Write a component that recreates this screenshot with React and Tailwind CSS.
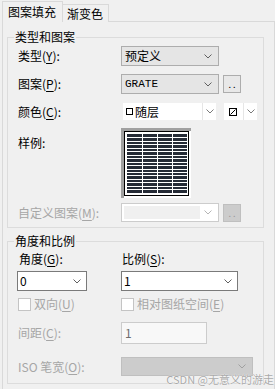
import React from 'react';

const Chevron = ({ color = '#606060' }) => (
  <svg width="8" height="5" viewBox="0 0 8 5" className="shrink-0">
    <polyline points="0.5,0.5 4,4 7.5,0.5" fill="none" stroke={color} strokeWidth="1" />
  </svg>
);

const Key = ({ children }) => <span className="underline underline-offset-2">{children}</span>;

// the GRATE preview swatch
const Swatch = () => {
  const rows = [];
  for (let y = 3.45; y < 59; y += 3.45) rows.push(Math.round(y) + 0.5);
  return (
    <svg width="60" height="59" viewBox="0 0 60 59" className="block">
      <rect width="60" height="59" fill="#252b36" />
      {rows.map((y) => (
        <line key={y} x1="0" x2="60" y1={y} y2={y} stroke="#fff" strokeWidth="1" />
      ))}
      {[15.5, 30.5, 45.5].map((x) => (
        <line key={x} x1={x} x2={x} y1="0" y2="59" stroke="#fff" strokeWidth="1" />
      ))}
    </svg>
  );
};

const App = () => {
  return (
    <div
      className="relative w-[275px] h-[389px] overflow-hidden bg-[#f0f0f0] pt-px pl-[2px] text-[12px] leading-[14px] text-black"
      style={{ fontFamily: '"Noto Sans CJK SC", "Noto Sans", sans-serif' }}
    >
      {/* Tabs */}
      <div className="flex items-end h-[21px]">
        <div className="relative z-10 h-[21px] w-[61px] border border-b-0 border-[#d9d9d9] bg-[#f0f0f0] pl-[5px] pt-[3px]">
          图案填充
        </div>
        <div className="h-[18px] w-[46px] border border-l-0 border-b-0 border-[#d9d9d9] bg-[#f0f0f0] pl-[4px] pt-[2px]">
          渐变色
        </div>
      </div>

      {/* Panel */}
      <div className="-mt-px w-[273px] h-[380px] border border-[#d9d9d9] pl-[4px] pt-[8px]">
        {/* 类型和图案 */}
        <fieldset className="w-[257px] border border-[#dcdcdc] pl-[10px] pb-[5px]">
          <legend className="-ml-[4px] px-[1px] leading-[14px]">类型和图案</legend>

          <div className="mt-[2px] flex items-center h-[20px]">
            <div className="w-[103px]">类型(<Key>Y</Key>):</div>
            <div className="flex items-center justify-between w-[98px] h-[20px] bg-[#e5e5e5] border border-[#adadad] pl-[3px] pr-[6px]">
              <span>预定义</span>
              <Chevron />
            </div>
          </div>

          <div className="mt-[8px] flex items-center h-[20px]">
            <div className="w-[103px]">图案(<Key>P</Key>):</div>
            <div className="flex items-center justify-between w-[98px] h-[20px] bg-[#e5e5e5] border border-[#adadad] pl-[3px] pr-[6px]">
              <span className="text-[11px]" style={{ fontFamily: '"Liberation Mono", monospace' }}>GRATE</span>
              <Chevron />
            </div>
            <div className="ml-[4px] flex items-end justify-center w-[18px] h-[18px] bg-[#e8e8e8] border border-[#adadad] pb-[3px] text-[9px] leading-[9px]">
              . .
            </div>
          </div>

          <div className="mt-[9px] flex items-center h-[17px]">
            <div className="w-[105px]">颜色(<Key>C</Key>):</div>
            <div className="flex items-center w-[93px] h-[17px] bg-white pl-[3px]">
              <span className="w-[7px] h-[7px] border border-black bg-white shrink-0"></span>
              <span className="ml-[2px] flex-1">随层</span>
              <div className="flex items-center justify-center w-[14px] h-[17px] border-l border-[#e6e6e6]">
                <Chevron color="#7a7a7a" />
              </div>
            </div>
            <div className="ml-[8px] flex items-center w-[33px] h-[17px] bg-white pl-[5px]">
              <svg width="8" height="8" viewBox="0 0 8 8" className="shrink-0">
                <rect x="0.5" y="0.5" width="7" height="7" fill="#fff" stroke="#000" />
                <line x1="1.5" y1="6.5" x2="6.5" y2="1.5" stroke="#000" />
              </svg>
              <div className="ml-auto flex items-center justify-center w-[14px] h-[17px] border-l border-[#e6e6e6]">
                <Chevron color="#7a7a7a" />
              </div>
            </div>
          </div>

          <div className="mt-[8px] flex">
            <div className="w-[103px] mt-[8px]">样例:</div>
            <div className="w-[70px] h-[70px] border-t-[3px] border-l-[3px] border-[#a0a0a0] bg-white pr-[2px] pb-[2px]">
              <div className="w-[65px] h-[65px] border border-black p-[2px]">
                <Swatch />
              </div>
            </div>
          </div>

          <div className="mt-[5px] flex items-center h-[19px] text-[#a6a6a6]">
            <div className="w-[103px] whitespace-nowrap">自定义图案(<Key>M</Key>):</div>
            <div className="flex items-center w-[98px] h-[19px] bg-white border border-[#cccccc] p-[2px]">
              <div className="flex-1 h-full bg-[#f0f0f0]"></div>
              <div className="w-[16px] flex justify-center">
                <Chevron color="#b5b5b5" />
              </div>
            </div>
            <div className="ml-[4px] flex items-end justify-center w-[18px] h-[18px] bg-[#cccccc] border border-[#bfbfbf] pb-[3px] text-[9px] leading-[9px] text-[#9a9a9a]">
              . .
            </div>
          </div>
        </fieldset>

        {/* 角度和比例 */}
        <fieldset className="mt-[6px] w-[257px] border border-[#dcdcdc] pl-[9px] pb-[7px]">
          <legend className="-ml-[3px] px-[1px] leading-[14px]">角度和比例</legend>

          <div className="mt-[4px] flex h-[14px]">
            <div className="w-[104px] pl-[2px]">角度(<Key>G</Key>):</div>
            <div className="pl-px">比例(<Key>S</Key>):</div>
          </div>

          <div className="mt-[5px] flex h-[20px]">
            <div className="w-[104px]">
              <div className="flex items-center justify-between w-[70px] h-[20px] bg-white border border-[#7a7a7a] pl-[2px] pr-[5px]">
                <span>0</span>
                <Chevron />
              </div>
            </div>
            <div className="flex items-center justify-between w-[117px] h-[20px] bg-white border border-[#7a7a7a] pl-[2px] pr-[5px]">
              <span>1</span>
              <Chevron />
            </div>
          </div>

          <div className="mt-[6px] flex items-center h-[14px] text-[#a6a6a6]">
            <div className="w-[104px] flex items-center pl-px">
              <span className="w-[13px] h-[13px] border border-[#c4c4c4] bg-white shrink-0"></span>
              <span className="ml-[3px]">双向(<Key>U</Key>)</span>
            </div>
            <span className="w-[13px] h-[13px] border border-[#c4c4c4] bg-white shrink-0"></span>
            <span className="ml-[3px]">相对图纸空间(<Key>E</Key>)</span>
          </div>

          <div className="mt-[11px] flex items-center h-[22px] text-[#a6a6a6]">
            <div className="w-[104px] pl-px">间距(<Key>C</Key>):</div>
            <div className="flex items-center w-[86px] h-[22px] bg-[#f8f8f8] border border-[#cccccc] pl-[3px] text-[#6d6d6d]">
              1
            </div>
          </div>

          <div className="mt-[13px] flex items-center h-[19px] text-[#a6a6a6]">
            <div className="w-[104px] pl-px whitespace-nowrap">ISO 笔宽(<Key>O</Key>):</div>
            <div className="flex items-center justify-end w-[132px] h-[19px] bg-[#cccccc] border border-[#bfbfbf] pr-[6px]">
              <Chevron color="#a0a0a0" />
            </div>
          </div>
        </fieldset>
      </div>

      {/* watermark */}
      <div
        className="absolute right-[1px] bottom-[4px] text-[11px] leading-[12px] text-[#a9a9a9] whitespace-nowrap"
        style={{ textShadow: '0 0 1px #fff, 0 0 1px #fff' }}
      >
        CSDN @无意义的游走
      </div>
    </div>
  );
};

export default App;
